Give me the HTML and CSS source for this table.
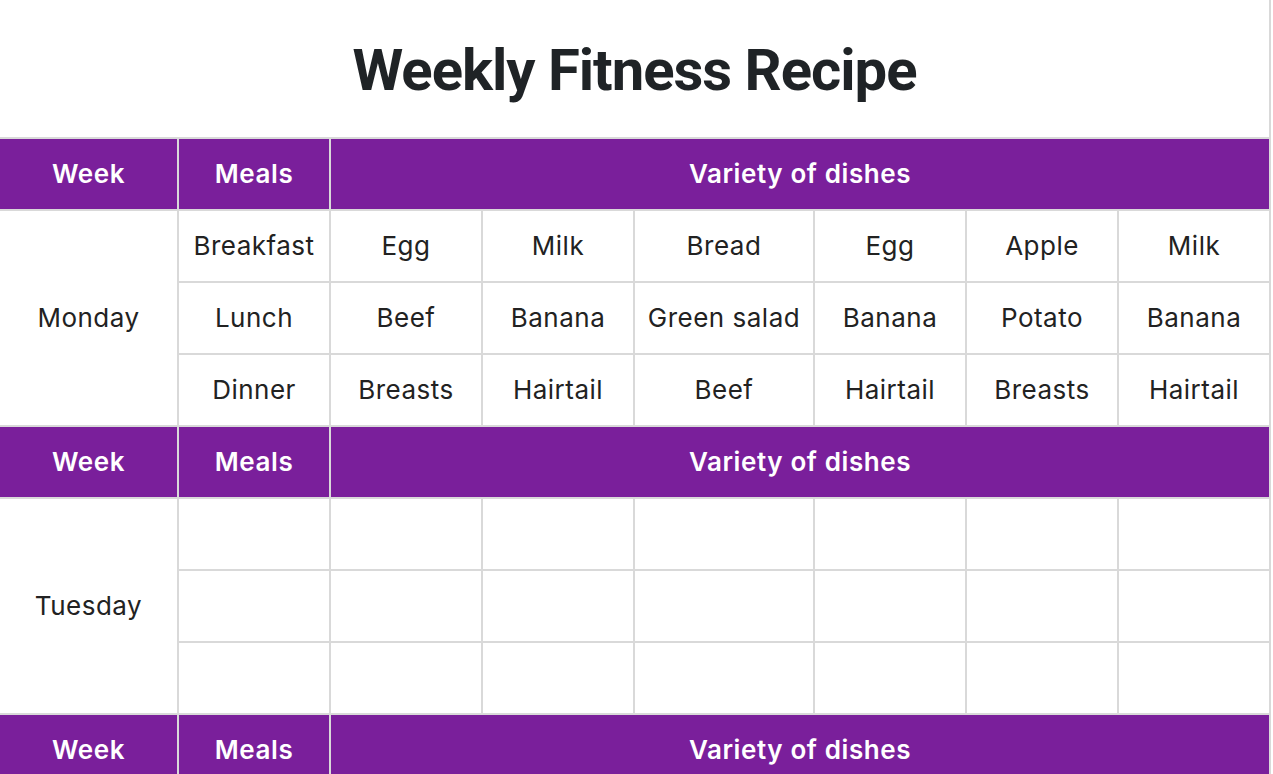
FILE: index.html
```html
<!DOCTYPE html>
<html lang="en">
<head>
<meta charset="utf-8">
<title>Weekly Fitness Recipe</title>
<link rel="stylesheet" href="styles.css">
</head>
<body>
<div class="page">
  <h1 class="title">Weekly Fitness Recipe</h1>
  <div class="table-wrap">
    <table class="recipe">
      <colgroup>
        <col class="c-week"><col class="c-meal"><col class="c-dish"><col class="c-dish"><col class="c-wide"><col class="c-dish"><col class="c-dish"><col class="c-dish">
      </colgroup>
      <tbody>
        <tr class="head"><th>Week</th><th>Meals</th><th colspan="6">Variety of dishes</th></tr>
        <tr><td rowspan="3">Monday</td><td>Breakfast</td><td>Egg</td><td>Milk</td><td>Bread</td><td>Egg</td><td>Apple</td><td>Milk</td></tr>
        <tr><td>Lunch</td><td>Beef</td><td>Banana</td><td>Green salad</td><td>Banana</td><td>Potato</td><td>Banana</td></tr>
        <tr><td>Dinner</td><td>Breasts</td><td>Hairtail</td><td>Beef</td><td>Hairtail</td><td>Breasts</td><td>Hairtail</td></tr>
        <tr class="head"><th>Week</th><th>Meals</th><th colspan="6">Variety of dishes</th></tr>
        <tr><td rowspan="3">Tuesday</td><td></td><td></td><td></td><td></td><td></td><td></td><td></td></tr>
        <tr><td></td><td></td><td></td><td></td><td></td><td></td><td></td></tr>
        <tr><td></td><td></td><td></td><td></td><td></td><td></td><td></td></tr>
        <tr class="head"><th>Week</th><th>Meals</th><th colspan="6">Variety of dishes</th></tr>
      </tbody>
    </table>
  </div>
</div>
</body>
</html>
```

FILE: styles.css
```css
html, body {
  margin: 0;
  padding: 0;
  background: #ffffff;
  overflow: hidden;
}

.page {
  width: 1269px;
  border-right: 2px solid #d9d9d9;
  min-height: 774px;
  overflow: hidden;
}

.title {
  margin: 0;
  height: 137px;
  display: flex;
  align-items: center;
  justify-content: center;
  font-family: Roboto, "Liberation Sans", sans-serif;
  font-weight: 700;
  font-size: 58px;
  letter-spacing: -1px;
  color: #1f2326;
  padding-top: 2px;
  box-sizing: border-box;
}

.table-wrap {
  margin-left: -2px;
}

.recipe {
  border-collapse: collapse;
  table-layout: fixed;
  width: 1273px;
  font-family: Inter, "Noto Sans", sans-serif;
  font-size: 26px;
  letter-spacing: 0.5px;
  color: #222222;
}

.c-week { width: 179px; }
.c-meal { width: 152px; }
.c-dish { width: 152px; }
.c-wide { width: 180px; }

.recipe th,
.recipe td {
  border: 2px solid #d9d9d9;
  height: 72px;
  padding: 0 0 2px 0;
  text-align: center;
  vertical-align: middle;
  box-sizing: border-box;
}

.recipe tr.head th {
  background: #7a1f9b;
  color: #ffffff;
  font-weight: 600;
  letter-spacing: 0.6px;
}
```
